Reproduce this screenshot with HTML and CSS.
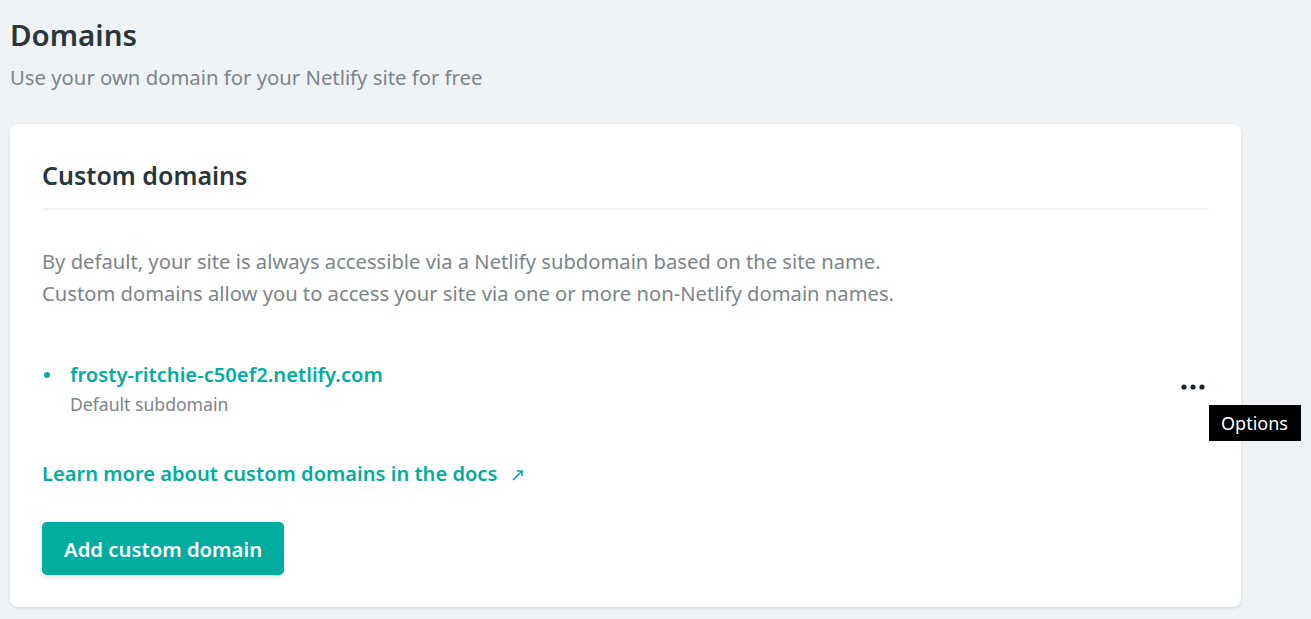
FILE: index.html
```html
<!DOCTYPE html>
<html lang="en">
<head>
<meta charset="utf-8">
<title>Domains</title>
<link rel="stylesheet" href="styles.css">
</head>
<body>
<main class="page">
  <header class="page-header">
    <h1 class="page-title">Domains</h1>
    <p class="page-subtitle">Use your own domain for your Netlify site for free</p>
  </header>
  <section class="card">
    <h2 class="card-title">Custom domains</h2>
    <div class="card-body">
      <p class="intro">By default, your site is always accessible via a Netlify subdomain based on the site name.<br>Custom domains allow you to access your site via one or more non-Netlify domain names.</p>
      <ul class="domain-list">
        <li class="domain-item">
          <span class="bullet"></span>
          <div class="domain-info">
            <a class="domain-name" href="#">frosty-ritchie-c50ef2.netlify.com</a>
            <span class="domain-note">Default subdomain</span>
          </div>
          <button class="options-btn" aria-label="Options">
            <svg width="24" height="6" viewBox="0 0 24 6"><circle cx="3" cy="3" r="2.6" fill="#1d2428"/><circle cx="12" cy="3" r="2.6" fill="#1d2428"/><circle cx="21" cy="3" r="2.6" fill="#1d2428"/></svg>
            <span class="tooltip">Options</span>
          </button>
        </li>
      </ul>
      <a class="docs-link" href="#">Learn more about custom domains in the docs <svg class="ext" width="13" height="13" viewBox="0 0 13 13"><path d="M2 11 L11 2 M6 2 H11 V7" fill="none" stroke="#00ad9f" stroke-width="1.6"/></svg></a>
      <div class="actions">
        <button class="btn-primary">Add custom domain</button>
      </div>
    </div>
  </section>
</main>
</body>
</html>
```
FILE: styles.css
```css
* { box-sizing: border-box; }
html, body { margin: 0; padding: 0; }
body {
  background: #f0f3f6;
  font-family: "Noto Sans", "Open Sans", sans-serif;
  color: #2e3b40;
  height: 619px;
  overflow: hidden;
}
.page {
  padding: 16px 0 0 10px;
  width: 1241px;
}
.page-header { margin-bottom: 32px; }
.page-title {
  margin: 0;
  font-size: 29.5px;
  line-height: 38px;
  font-weight: 600;
  color: #2a353a;
}
.page-subtitle {
  margin: 8px 0 0;
  font-size: 20.3px;
  line-height: 30px;
  color: #7c8589;
}
.card {
  background: #fff;
  border-radius: 8px;
  box-shadow: 0 1px 3px rgba(30, 40, 50, 0.14);
  padding: 31px 32px 32px;
}
.card-title {
  margin: 0;
  font-size: 25px;
  line-height: 40px;
  font-weight: 600;
  color: #2a353a;
  padding-bottom: 13px;
  border-bottom: 2px solid #f0f3f6;
}
.card-body { padding-top: 35px; }
.intro {
  margin: 0;
  font-size: 20.2px;
  line-height: 32px;
  color: #7c8589;
}
.domain-list {
  list-style: none;
  margin: 50px 0 0;
  padding: 0;
}
.domain-item {
  display: flex;
  align-items: flex-start;
  position: relative;
}
.bullet {
  width: 6px;
  height: 6px;
  border-radius: 50%;
  background: #00ad9f;
  margin: 13px 20px 0 2px;
  flex: none;
}
.domain-info {
  display: flex;
  flex-direction: column;
  flex: 1;
}
.domain-name {
  font-size: 20.2px;
  line-height: 30px;
  font-weight: 600;
  color: #00ad9f;
  text-decoration: none;
}
.domain-note {
  margin-top: 1px;
  font-size: 17.6px;
  line-height: 28px;
  color: #7c8589;
}
.options-btn {
  position: relative;
  background: none;
  border: 0;
  padding: 0;
  margin: 25px 4px 0 0;
  width: 24px;
  height: 6px;
  display: flex;
  cursor: pointer;
}
.tooltip {
  position: absolute;
  left: 28px;
  top: 21px;
  background: #000;
  color: #fff;
  font-size: 18px;
  line-height: 36px;
  padding: 0 13px 0 12px;
  white-space: nowrap;
  font-family: "Noto Sans", "Open Sans", sans-serif;
}
.docs-link {
  display: inline-flex;
  align-items: center;
  gap: 14px;
  margin-top: 41px;
  font-size: 20.1px;
  line-height: 30px;
  font-weight: 600;
  color: #00ad9f;
  text-decoration: none;
}
.ext { margin-top: 2px; }
.actions { margin-top: 33px; }
.btn-primary {
  background: #00ad9f;
  color: #fff;
  border: 0;
  border-radius: 5px;
  font-family: inherit;
  font-size: 20.3px;
  font-weight: 600;
  height: 53px;
  padding: 0 22px;
  box-shadow: 0 2px 4px rgba(0, 0, 0, 0.12);
  cursor: pointer;
}
```
